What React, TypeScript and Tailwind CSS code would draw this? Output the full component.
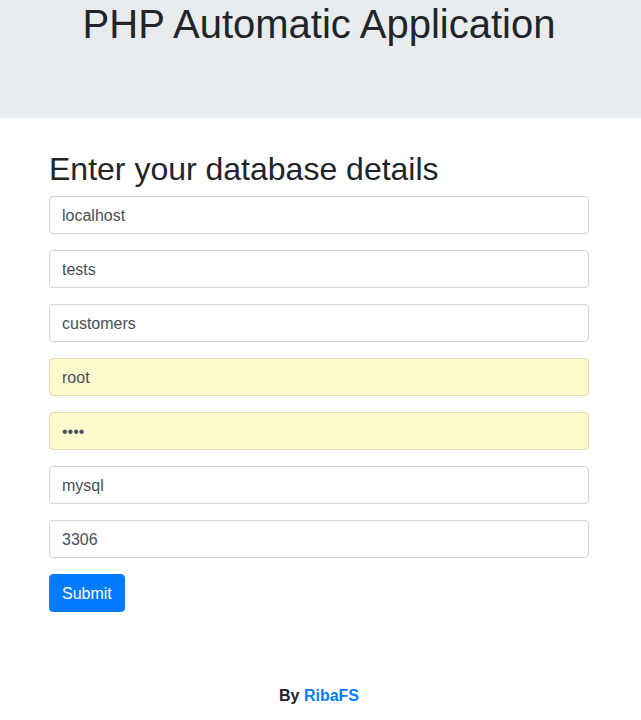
import { useState } from "react";

const fields = [
  { name: "host", value: "localhost", type: "text", autofill: false },
  { name: "db", value: "tests", type: "text", autofill: false },
  { name: "table", value: "customers", type: "text", autofill: false },
  { name: "user", value: "root", type: "text", autofill: true },
  { name: "pass", value: "root", type: "password", autofill: true },
  { name: "sgbd", value: "mysql", type: "text", autofill: false },
  { name: "port", value: "3306", type: "text", autofill: false },
];

export default function App() {
  const [values, setValues] = useState<Record<string, string>>(
    Object.fromEntries(fields.map((f) => [f.name, f.value]))
  );

  return (
    <div className="min-h-screen bg-white text-[#212529] font-['Liberation_Sans',Arial,sans-serif] text-base">
      {/* Jumbotron */}
      <div className="h-[118px] bg-[#e9ecef] mb-8">
        <h1 className="text-[40px] leading-[1.2] font-normal text-center pr-[3px]">
          PHP Automatic Application
        </h1>
      </div>

      <div className="w-[540px] ml-[49px]">
        <h2 className="text-[32px] leading-[1.2] font-normal mb-2">
          Enter your database details
        </h2>
        <form onSubmit={(e) => e.preventDefault()}>
          {fields.map((f) => (
            <div key={f.name} className="mb-4">
              <input
                type={f.type}
                name={f.name}
                value={values[f.name]}
                onChange={(e) => setValues({ ...values, [f.name]: e.target.value })}
                className={`block w-full h-[38px] px-3 pt-[7px] pb-[5px] text-base leading-6 text-[#495057] border rounded outline-none ${
                  f.autofill ? "bg-[#fffacd] border-[#e3dcae]" : "bg-white border-[#ced4da]"
                }`}
              />
            </div>
          ))}
          <button
            type="submit"
            className="h-[38px] px-3 pt-[7px] pb-[5px] text-base leading-6 text-white bg-[#007bff] border border-[#007bff] rounded"
          >
            Submit
          </button>
        </form>
      </div>

      {/* Footer */}
      <div className="mt-[72px] text-center font-bold leading-6 pr-[3px]">
        By <a href="#" className="text-[#007bff]">RibaFS</a>
      </div>
    </div>
  );
}
